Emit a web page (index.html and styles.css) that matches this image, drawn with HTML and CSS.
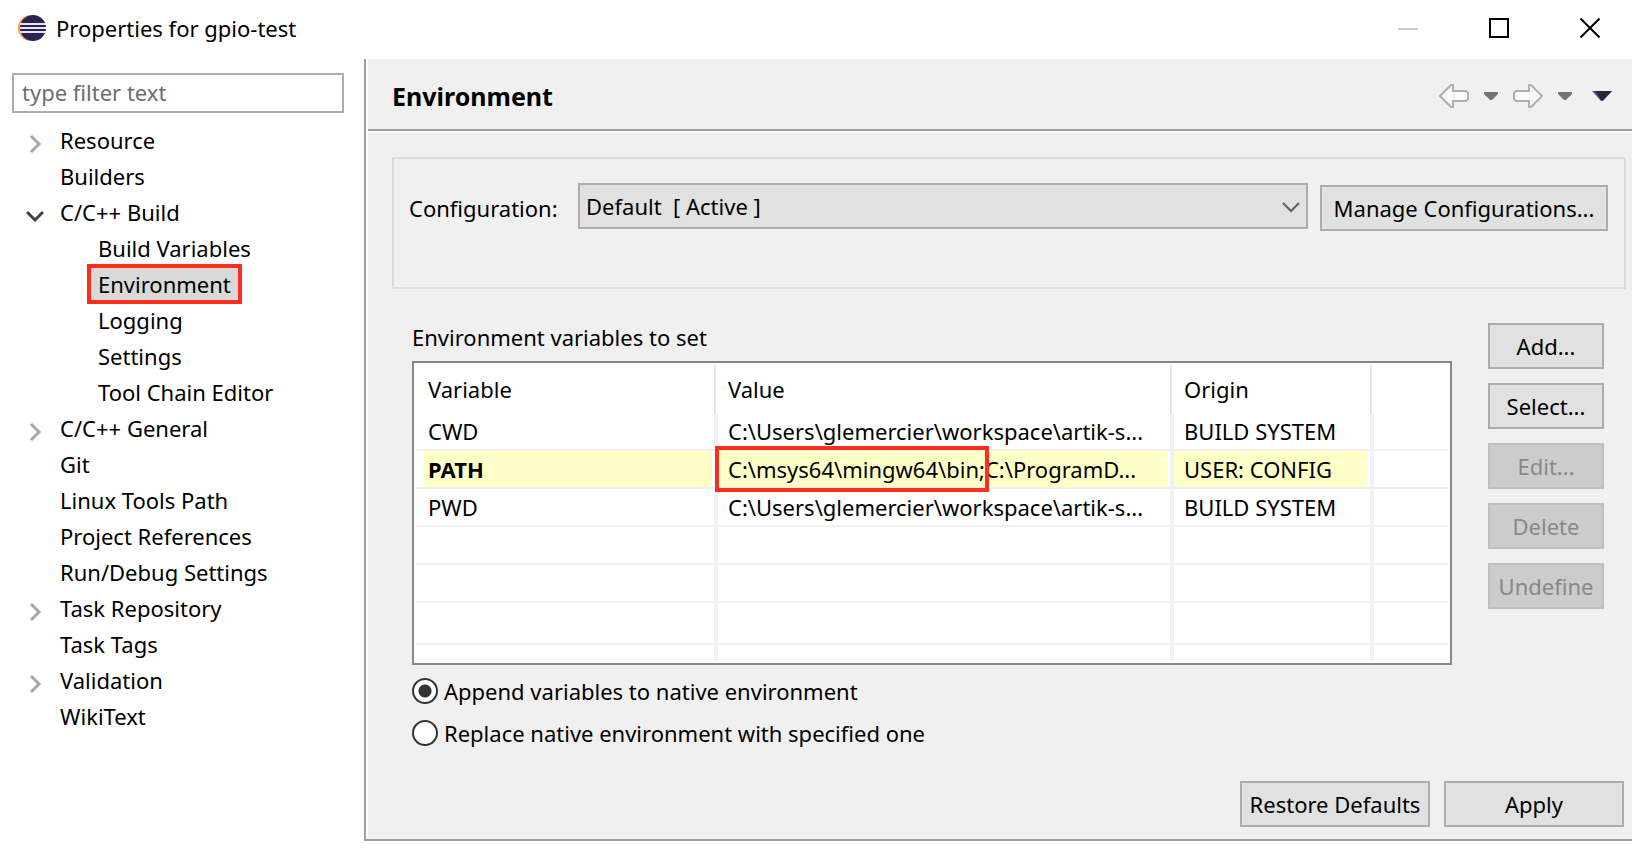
FILE: index.html
```html
<!DOCTYPE html>
<html lang="en">
<head>
<meta charset="utf-8">
<title>Properties for gpio-test</title>
<link rel="stylesheet" href="styles.css">
</head>
<body>
<div class="window">
  <header class="titlebar">
    <svg class="app-icon" width="30" height="28" viewBox="0 0 30 28" aria-hidden="true">
      <circle cx="14" cy="14" r="13" fill="#f7a23b"/>
      <circle cx="17" cy="14" r="13" fill="#fff"/>
      <circle cx="16" cy="14" r="13" fill="#2c2255"/>
      <path d="M3 9h26v2H3zM3 13h26v2H3zM3 17h26v2H3z" fill="#e6e4f0"/>
    </svg>
    <h1 class="title">Properties for gpio-test</h1>
    <div class="window-buttons">
      <button class="icon-button" type="button" aria-label="Minimize"><svg width="20" height="20" viewBox="0 0 20 20"><path d="M0 11h20" stroke="#ccc" stroke-width="2"/></svg></button>
      <button class="icon-button" type="button" aria-label="Maximize"><svg width="20" height="20" viewBox="0 0 20 20"><path d="M1 1h18v18H1z" fill="none" stroke="#000" stroke-width="2"/></svg></button>
      <button class="icon-button" type="button" aria-label="Close"><svg width="20" height="20" viewBox="0 0 20 20"><path d="M0.500 0.500l19 19M19.500 0.500l-19 19" stroke="#000" stroke-width="2"/></svg></button>
    </div>
  </header>

  <div class="body">
    <nav class="sidebar" aria-label="Property pages">
      <input class="filter" type="text" placeholder="type filter text" aria-label="Filter">
      <ul class="tree">
        <li><svg class="chevron" viewBox="0 0 18 20"><path d="M5 2l8 8-8 8" stroke="#a6a6a6"/></svg><span class="item">Resource</span></li>
        <li><span class="item">Builders</span></li>
        <li><svg class="chevron" viewBox="0 0 18 20"><path d="M1 6l8 8 8-8" stroke="#404040"/></svg><span class="item">C/C++ Build</span></li>
        <li class="child"><span class="item">Build Variables</span></li>
        <li class="child"><span class="item selected">Environment</span></li>
        <li class="child"><span class="item">Logging</span></li>
        <li class="child"><span class="item">Settings</span></li>
        <li class="child"><span class="item">Tool Chain Editor</span></li>
        <li><svg class="chevron" viewBox="0 0 18 20"><path d="M5 2l8 8-8 8" stroke="#a6a6a6"/></svg><span class="item">C/C++ General</span></li>
        <li><span class="item">Git</span></li>
        <li><span class="item">Linux Tools Path</span></li>
        <li><span class="item">Project References</span></li>
        <li><span class="item">Run/Debug Settings</span></li>
        <li><svg class="chevron" viewBox="0 0 18 20"><path d="M5 2l8 8-8 8" stroke="#a6a6a6"/></svg><span class="item">Task Repository</span></li>
        <li><span class="item">Task Tags</span></li>
        <li><svg class="chevron" viewBox="0 0 18 20"><path d="M5 2l8 8-8 8" stroke="#a6a6a6"/></svg><span class="item">Validation</span></li>
        <li><span class="item">WikiText</span></li>
      </ul>
    </nav>

    <main class="page">
      <div class="page-header">
        <h2 class="page-title">Environment</h2>
        <div class="page-nav">
          <button class="icon-button" type="button" aria-label="Back"><svg width="30" height="24" viewBox="0 0 30 24"><path d="M1 12L12 1h2v6h13l2 2v6l-2 2H14v6h-2z" fill="#f9f9f9" stroke="#b0b0b0" stroke-width="2"/></svg></button>
          <button class="icon-button" type="button" aria-label="Back history"><svg width="14" height="8" viewBox="0 0 14 8"><path d="M0 0h14v2L8 8H6L0 2z" fill="#747474"/></svg></button>
          <button class="icon-button" type="button" aria-label="Forward"><svg width="30" height="24" viewBox="0 0 30 24"><path d="M29 12L18 1h-2v6H3L1 9v6l2 2h13v6h2z" fill="#f9f9f9" stroke="#b0b0b0" stroke-width="2"/></svg></button>
          <button class="icon-button" type="button" aria-label="Forward history"><svg width="14" height="8" viewBox="0 0 14 8"><path d="M0 0h14v2L8 8H6L0 2z" fill="#747474"/></svg></button>
          <button class="icon-button view-menu" type="button" aria-label="View menu"><svg width="20" height="10" viewBox="0 0 20 10"><path d="M0 0h20l-9 10H9z" fill="#6b3fb0"/><path d="M3 0h17l-9 9H9z" fill="#2e2438"/></svg></button>
        </div>
      </div>

      <div class="content">
        <section class="config">
          <label class="config-label" for="configuration">Configuration:</label>
          <div class="combo">
            <select id="configuration"><option>Default&nbsp; [ Active ]</option></select>
            <svg class="combo-arrow" width="18" height="12" viewBox="0 0 18 12" aria-hidden="true"><path d="M1 2l8 8 8-8" fill="none" stroke="#606060" stroke-width="2"/></svg>
          </div>
          <button class="button manage" type="button">Manage Configurations...</button>
        </section>

        <section class="variables">
          <div class="variables-main">
            <h3 class="caption" id="vars-caption">Environment variables to set</h3>
            <div class="table-frame">
              <table aria-labelledby="vars-caption">
                <colgroup><col class="col-variable"><col class="col-value"><col class="col-origin"><col></colgroup>
                <thead>
                  <tr><th><span class="cell">Variable</span></th><th><span class="cell">Value</span></th><th><span class="cell">Origin</span></th><th></th></tr>
                </thead>
                <tbody>
                  <tr><td><span class="cell">CWD</span></td><td><span class="cell">C:\Users\glemercier\workspace\artik-s...</span></td><td><span class="cell">BUILD SYSTEM</span></td><td></td></tr>
                  <tr class="user"><td><span class="cell"><b>PATH</b></span></td><td><span class="cell"><span class="marked">C:\msys64\mingw64\bin;</span>C:\ProgramD...</span></td><td><span class="cell">USER: CONFIG</span></td><td></td></tr>
                  <tr><td><span class="cell">PWD</span></td><td><span class="cell">C:\Users\glemercier\workspace\artik-s...</span></td><td><span class="cell">BUILD SYSTEM</span></td><td></td></tr>
                  <tr><td></td><td></td><td></td><td></td></tr>
                  <tr><td></td><td></td><td></td><td></td></tr>
                  <tr class="tall"><td></td><td></td><td></td><td></td></tr>
                  <tr class="rest"><td></td><td></td><td></td><td></td></tr>
                </tbody>
              </table>
            </div>
            <div class="options">
              <label class="option"><input type="radio" name="mode" checked>Append variables to native environment</label>
              <label class="option"><input type="radio" name="mode">Replace native environment with specified one</label>
            </div>
          </div>
          <div class="actions">
            <button class="button" type="button">Add...</button>
            <button class="button" type="button">Select...</button>
            <button class="button" type="button" disabled>Edit...</button>
            <button class="button" type="button" disabled>Delete</button>
            <button class="button" type="button" disabled>Undefine</button>
          </div>
        </section>

        <footer class="footer">
          <button class="button restore" type="button">Restore Defaults</button>
          <button class="button apply" type="button">Apply</button>
        </footer>
      </div>
    </main>
  </div>
</div>
</body>
</html>
```
FILE: styles.css
```css
* {
  box-sizing: border-box;
}

body {
  margin: 0;
  background: #fff;
  color: #000;
  font: 22px/36px "Noto Sans", "Open Sans", sans-serif;
}

button,
input,
select {
  font: inherit;
  color: inherit;
}

h1,
h2,
h3 {
  margin: 0;
  font-size: inherit;
  font-weight: 400;
}

.window {
  display: flex;
  flex-direction: column;
  min-height: 100vh;
  padding-bottom: 11px;
}

.titlebar {
  display: flex;
  align-items: center;
  height: 59px;
  padding: 0 32px 4px 17px;
}

.app-icon {
  margin-right: 9px;
}

.title {
  flex: 1;
}

.window-buttons {
  display: flex;
  gap: 71px;
}

.icon-button {
  display: flex;
  padding: 0;
  border: 0;
  background: none;
}

.body {
  display: flex;
  flex: 1;
}

.sidebar {
  flex: 0 0 364px;
  padding: 14px 20px 0 12px;
}

.filter {
  display: block;
  width: 100%;
  height: 40px;
  padding: 0 8px 2px;
  border: 2px solid #abadb3;
  background: #fff;
}

.filter::placeholder {
  color: #6d6d6d;
  opacity: 1;
}

.tree {
  margin: 9px 0 0;
  padding: 0;
  list-style: none;
}

.tree li {
  display: flex;
  align-items: center;
  height: 36px;
  padding-left: 48px;
  white-space: nowrap;
}

.tree .child {
  padding-left: 86px;
}

.chevron {
  width: 18px;
  height: 20px;
  margin: 8px 16px 0 -34px;
  fill: none;
  stroke-width: 3;
}

.selected {
  margin: 0 -11px;
  padding: 0 7px;
  border: 4px solid #ff2d1c;
  background: #d9d9d9;
  line-height: 32px;
}

.page {
  display: flex;
  flex: 1;
  flex-direction: column;
  min-width: 0;
  border-bottom: 2px solid #a0a0a0;
  border-left: 2px solid #a0a0a0;
  background: #f0f0f0;
  box-shadow: inset 2px 0 #fff;
}

.page-header {
  display: flex;
  align-items: center;
  justify-content: space-between;
  height: 72px;
  margin-left: 2px;
  padding: 4px 20px 0 24px;
  border-bottom: 2px solid #a0a0a0;
  box-shadow: 0 2px #fff;
}

.page-title {
  font-size: 25px;
  font-weight: 700;
}

.page-nav {
  display: flex;
  align-items: center;
  gap: 15px;
}

.view-menu {
  margin-left: 5px;
}

.content {
  display: flex;
  flex: 1;
  flex-direction: column;
  padding: 26px 6px 12px 26px;
}

.config {
  display: flex;
  align-items: flex-start;
  height: 132px;
  padding: 24px 16px 0 15px;
  border: 2px solid #dcdcdc;
}

.config-label {
  flex: 0 0 169px;
  line-height: 50px;
}

.combo {
  position: relative;
  flex: 1;
  margin-right: 12px;
}

.combo select {
  display: block;
  width: 100%;
  height: 46px;
  padding: 0 6px;
  border: 2px solid #adadad;
  border-radius: 0;
  background: #e1e1e1;
  appearance: none;
}

.combo-arrow {
  position: absolute;
  top: 18px;
  right: 8px;
  pointer-events: none;
}

.button {
  height: 46px;
  padding: 0;
  border: 2px solid #adadad;
  background: #e1e1e1;
  text-align: center;
  white-space: nowrap;
}

.button:disabled {
  border-color: #bfbfbf;
  background: #ccc;
  color: #888;
}

.manage {
  width: 288px;
  margin-top: 2px;
}

.variables {
  display: flex;
  gap: 36px;
  padding: 30px 22px 0 20px;
}

.variables-main {
  flex: 1;
  min-width: 0;
}

.caption {
  margin-bottom: 6px;
}

.table-frame {
  padding: 2px;
  border: 2px solid #828790;
  background: #fff;
}

table {
  width: 100%;
  border-spacing: 0;
  table-layout: fixed;
}

.col-variable {
  width: 302px;
}

.col-value {
  width: 456px;
}

.col-origin {
  width: 200px;
}

th,
td {
  padding: 0;
  font-weight: 400;
  text-align: left;
  white-space: nowrap;
}

th {
  height: 48px;
}

td {
  height: 38px;
  border-bottom: 2px solid #f0f0f0;
}

th:not(:last-child) {
  background: linear-gradient(to right, #e5e5e5 50%, #fff 50%) right / 4px 100% no-repeat;
}

td:not(:last-child) {
  background: linear-gradient(to right, #edf3fd 50%, #f0f0f0 50%) right / 4px 100% no-repeat;
}

.tall td {
  height: 42px;
}

.rest td {
  height: 16px;
  border-bottom: 0;
}

.cell {
  display: block;
  margin-right: 6px;
  padding-left: 10px;
}

th:first-child .cell,
td:first-child .cell {
  margin-left: 8px;
  padding-left: 4px;
}

.user .cell {
  background: #ffffc8;
}

.marked {
  position: relative;
}

.marked::after {
  position: absolute;
  inset: -8px -4px -8px -13px;
  border: 4px solid #ff2d1c;
  content: "";
}

.options {
  display: flex;
  flex-direction: column;
  gap: 6px;
  padding-top: 8px;
}

.option {
  display: flex;
  align-items: center;
  gap: 6px;
}

.option input {
  width: 26px;
  height: 26px;
  margin: 0;
  border: 2px solid #333;
  border-radius: 50%;
  background: #fff;
  appearance: none;
}

.option input:checked {
  background: radial-gradient(circle, #333 6px, #fff 7px);
}

.actions {
  display: flex;
  flex: 0 0 116px;
  flex-direction: column;
  gap: 14px;
  padding-top: 4px;
}

.footer {
  display: flex;
  gap: 14px;
  justify-content: flex-end;
  margin-top: auto;
  padding-right: 2px;
}

.restore {
  width: 190px;
}

.apply {
  width: 180px;
}
```
